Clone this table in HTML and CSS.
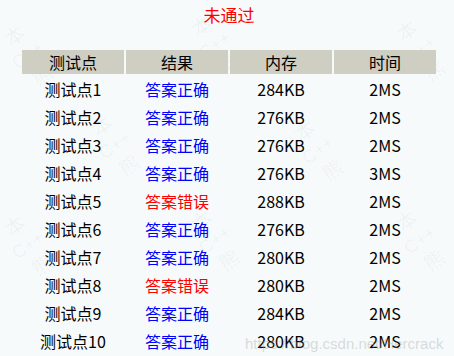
FILE: index.html
```html
<!DOCTYPE html>
<html>
<head>
<meta charset="utf-8">
<link rel="stylesheet" href="styles.css">
</head>
<body>
<div class="page">
  <div class="marks" aria-hidden="true">
    <div class="mark m1"><span>本</span><span>C++</span><span>熊</span></div>
    <div class="mark m2"><span>本</span><span>C++</span><span>熊</span></div>
    <div class="mark m3"><span>本</span><span>C++</span><span>熊</span></div>
    <div class="mark m4"><span>本</span><span>C++</span><span>熊</span></div>
    <div class="mark m5"><span>本</span><span>C++</span><span>熊</span></div>
    <div class="mark m6"><span>本</span><span>C++</span><span>熊</span></div>
    <div class="mark m7"><span>本</span><span>C++</span><span>熊</span></div>
    <div class="mark m8"><span>本</span><span>C++</span><span>熊</span></div>
  </div>
  <div class="wrap">
    <h1 class="title">未通过</h1>
    <table class="result">
      <thead>
        <tr><th>测试点</th><th>结果</th><th>内存</th><th>时间</th></tr>
      </thead>
      <tbody>
        <tr><td>测试点1</td><td class="ok">答案正确</td><td>284KB</td><td>2MS</td></tr>
        <tr><td>测试点2</td><td class="ok">答案正确</td><td>276KB</td><td>2MS</td></tr>
        <tr><td>测试点3</td><td class="ok">答案正确</td><td>276KB</td><td>2MS</td></tr>
        <tr><td>测试点4</td><td class="ok">答案正确</td><td>276KB</td><td>3MS</td></tr>
        <tr><td>测试点5</td><td class="bad">答案错误</td><td>288KB</td><td>2MS</td></tr>
        <tr><td>测试点6</td><td class="ok">答案正确</td><td>276KB</td><td>2MS</td></tr>
        <tr><td>测试点7</td><td class="ok">答案正确</td><td>280KB</td><td>2MS</td></tr>
        <tr><td>测试点8</td><td class="bad">答案错误</td><td>280KB</td><td>2MS</td></tr>
        <tr><td>测试点9</td><td class="ok">答案正确</td><td>284KB</td><td>2MS</td></tr>
        <tr><td>测试点10</td><td class="ok">答案正确</td><td>280KB</td><td>2MS</td></tr>
      </tbody>
    </table>
  </div>
  <div class="url">https://blog.csdn.net/Hercrack</div>
</div>
</body>
</html>
```
FILE: styles.css
```css
html, body {
  margin: 0;
  padding: 0;
  background: #f6fafa;
}
body {
  font-family: "Noto Sans CJK SC", "Noto Sans", sans-serif;
  color: #000;
  width: 454px;
  height: 356px;
  overflow: hidden;
}
.page {
  position: relative;
  width: 454px;
  height: 356px;
  overflow: hidden;
}
.wrap {
  position: relative;
  width: 418px;
  margin-left: 20px;
  padding-top: 4px;
}
.title {
  margin: 0;
  font-size: 17px;
  font-weight: normal;
  color: #ff0000;
  text-align: center;
  line-height: 22px;
  height: 22px;
}
.result {
  margin-top: 22px;
  border-collapse: separate;
  border-spacing: 2px;
  width: 418px;
  table-layout: fixed;
  font-size: 16px;
}
.result th {
  background: #cfcec2;
  font-weight: normal;
  height: 24px;
  padding: 0;
  line-height: 24px;
  text-align: center;
}
.result td {
  height: 26px;
  padding: 0;
  line-height: 26px;
  text-align: center;
}
.result td.ok { color: #0000ff; }
.result td.bad { color: #ff0000; }
.marks {
  position: absolute;
  inset: 0;
  pointer-events: none;
}
.mark {
  position: absolute;
  display: flex;
  flex-direction: column;
  align-items: center;
  gap: 2px;
  width: 40px;
  color: rgba(0, 0, 0, 0.045);
  font-size: 20px;
  line-height: 22px;
  transform: rotate(-35deg);
}
.mark span:nth-child(2) {
  font-family: "Liberation Sans", sans-serif;
  font-size: 18px;
}
.m1 { left: 8px; top: 20px; }
.m2 { left: 195px; top: 10px; }
.m3 { left: 400px; top: 15px; }
.m4 { left: 95px; top: 110px; }
.m5 { left: 298px; top: 115px; }
.m6 { left: 8px; top: 210px; }
.m7 { left: 195px; top: 205px; }
.m8 { left: 400px; top: 205px; }
.url {
  position: absolute;
  left: 245px;
  top: 335px;
  font-family: "Liberation Sans", sans-serif;
  font-size: 15px;
  color: rgba(150, 155, 158, 0.35);
  white-space: nowrap;
}
```
